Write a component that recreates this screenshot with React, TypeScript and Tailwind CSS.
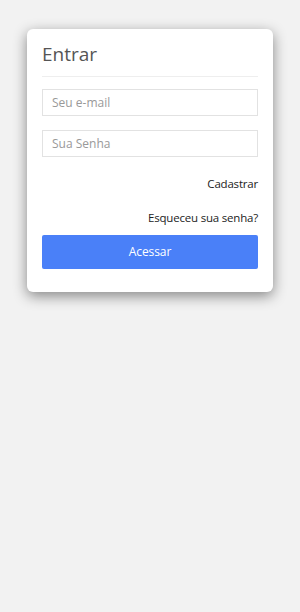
export default function App() {
  return (
    <div className="min-h-[612px] w-full bg-[#f2f2f2] px-[27px] pt-[29px] font-['Open_Sans',sans-serif]">
      <div className="rounded-[6px] bg-white px-[15px] pb-[23px] pt-[12px] shadow-[0_4px_14px_rgba(0,0,0,0.45)]">
        <h1 className="text-[19px] leading-[27px] text-[#555]">Entrar</h1>
        <div className="mt-[8px] border-t border-[#eee]" />
        <input
          placeholder="Seu e-mail"
          className="mt-[12px] block h-[27px] w-full border border-[#e2e2e2] px-[9px] text-[12px] text-[#555] placeholder:text-[#999] outline-none"
        />
        <input
          type="password"
          placeholder="Sua Senha"
          className="mt-[14px] block h-[27px] w-full border border-[#e2e2e2] px-[9px] text-[12px] text-[#555] placeholder:text-[#999] outline-none"
        />
        <div className="mt-[18px] flex justify-end">
          <span className="text-[11.5px] leading-[18px] tracking-[-0.2px] text-[#222]">Cadastrar</span>
        </div>
        <div className="mt-[16px] flex justify-end">
          <span className="text-[11.5px] leading-[18px] tracking-[-0.2px] text-[#222]">Esqueceu sua senha?</span>
        </div>
        <button className="mt-[8px] block h-[34px] w-full rounded-[2px] bg-[#4a80f8] text-[12px] tracking-[-0.1px] text-white">
          Acessar
        </button>
      </div>
    </div>
  )
}
